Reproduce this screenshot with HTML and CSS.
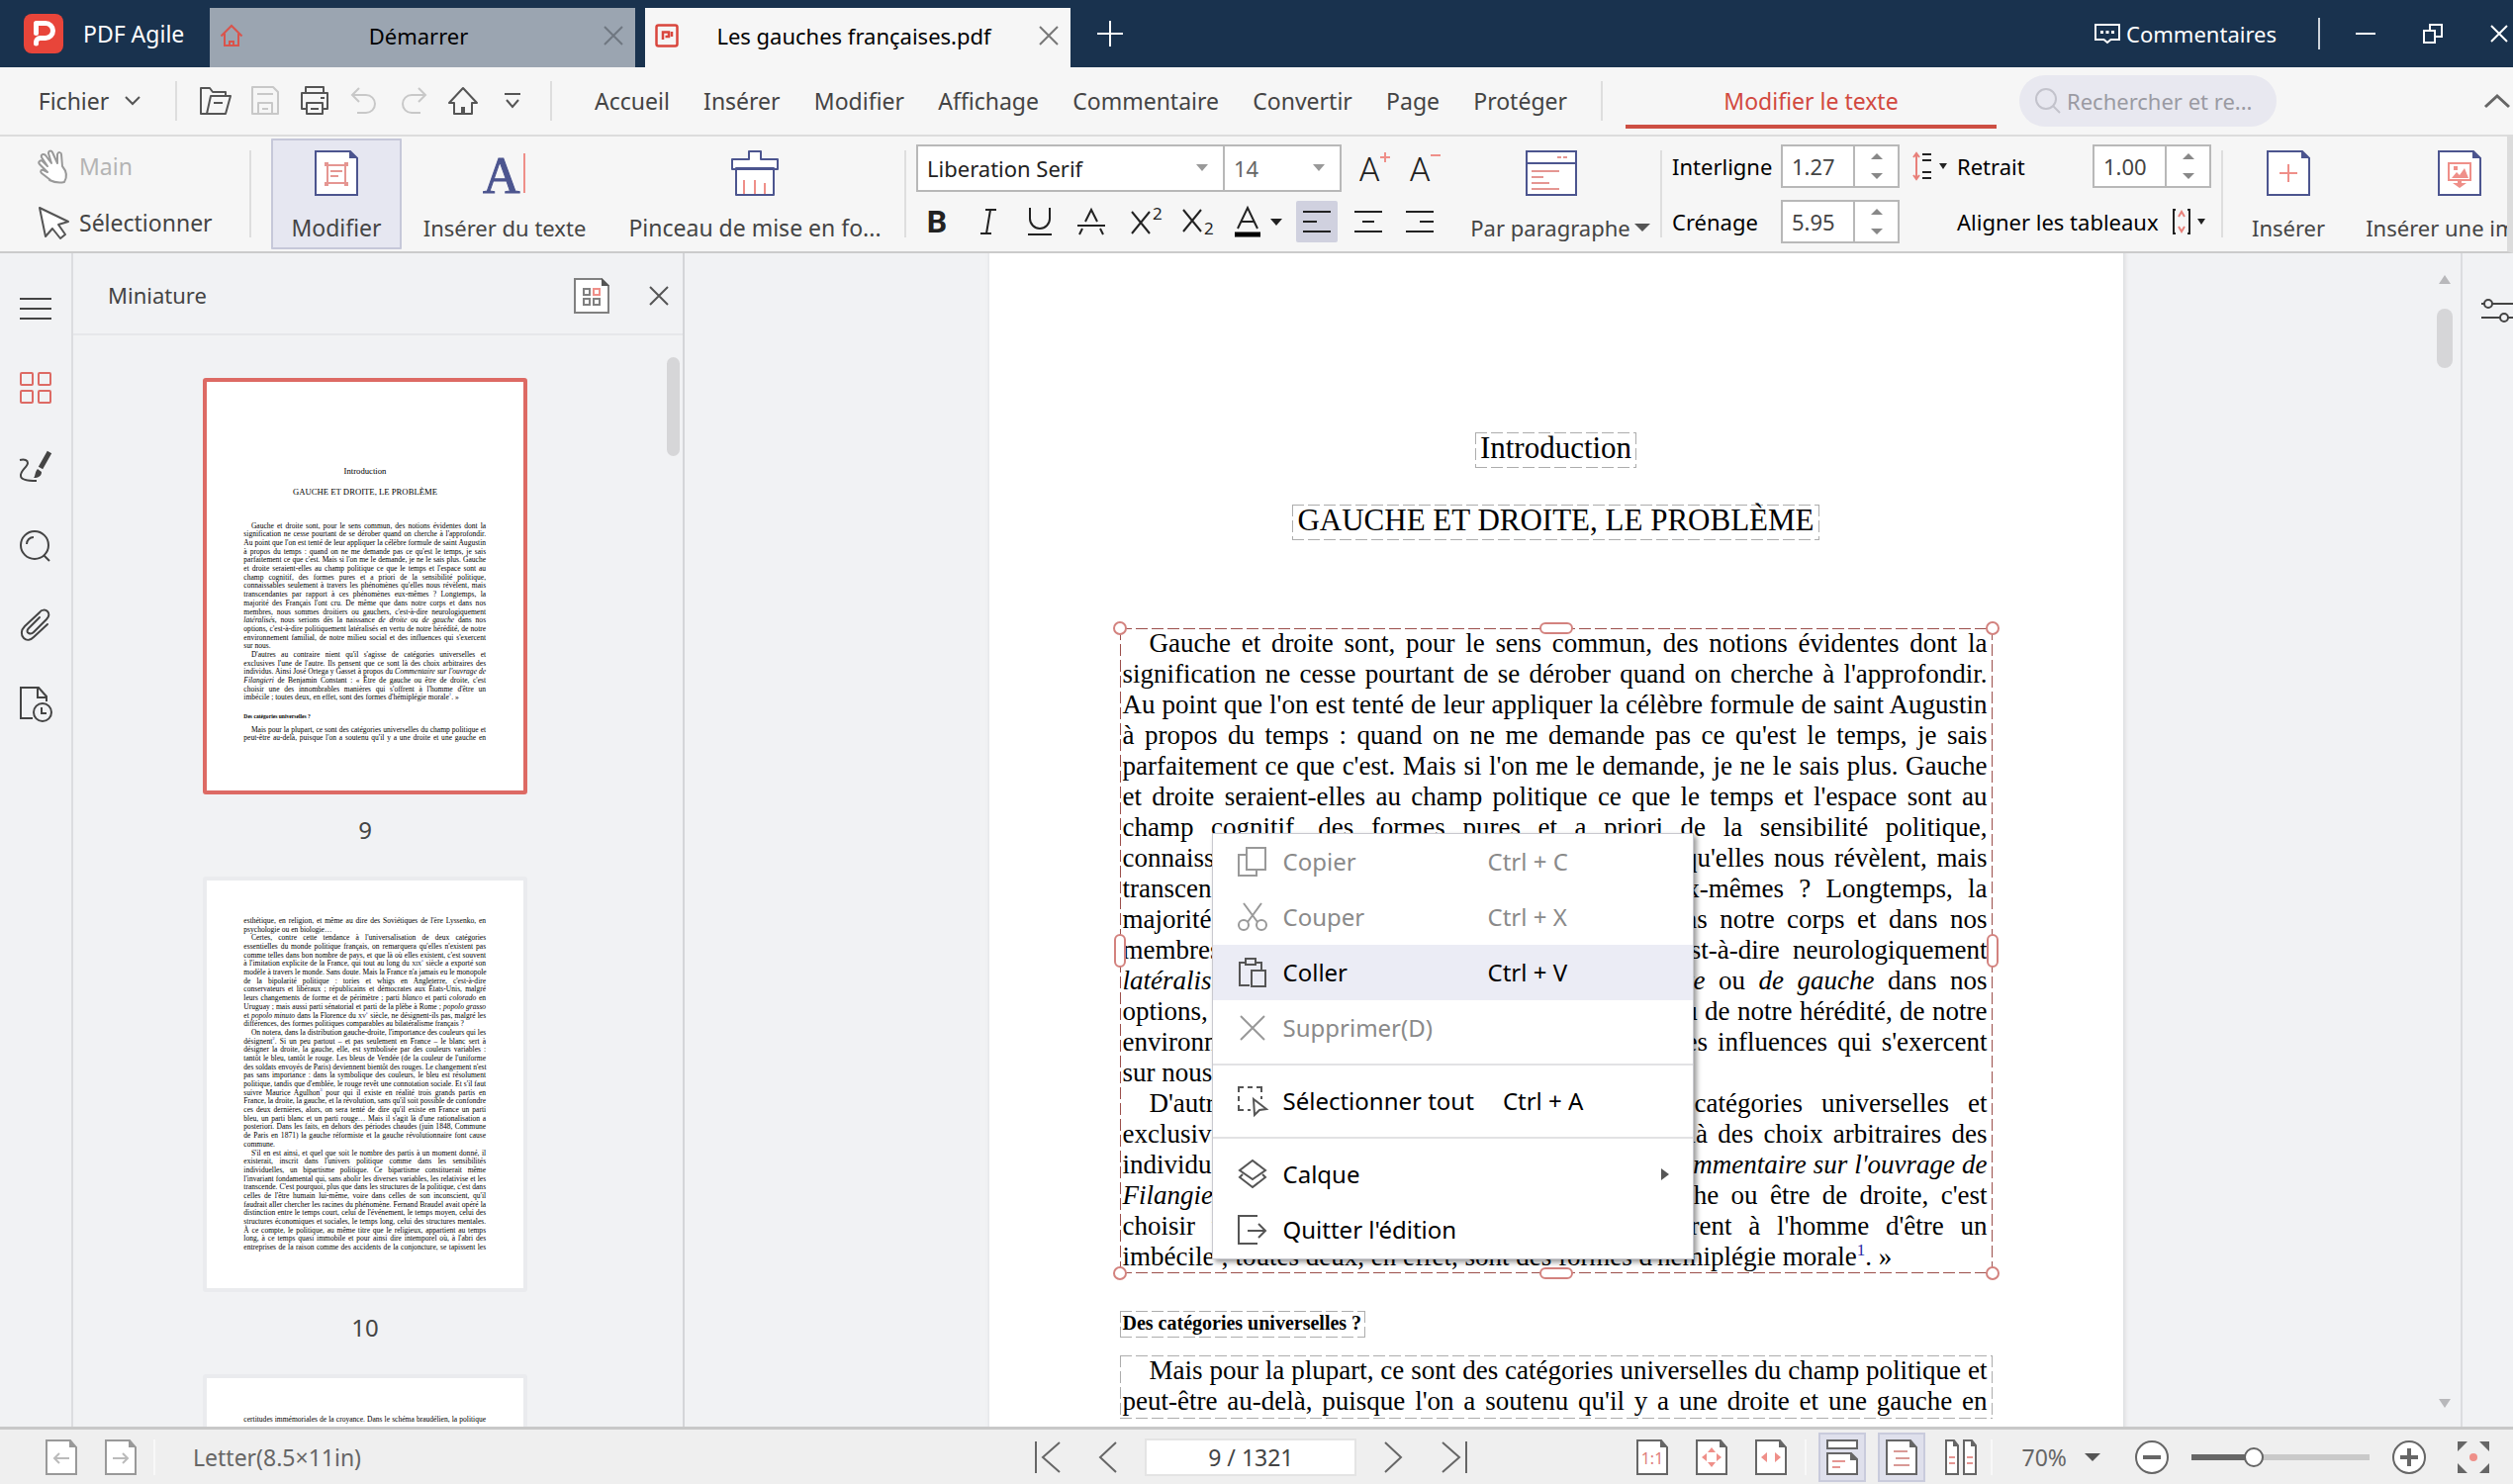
FILE: index.html
```html
<!DOCTYPE html>
<html lang="fr">
<head>
<meta charset="utf-8">
<title>PDF Agile - Les gauches françaises.pdf</title>
<link rel="stylesheet" href="styles.css">
</head>
<body>
<div class="app">

<header class="titlebar">
  <div class="brand">
    <svg class="brand-logo" width="40" height="40" viewBox="0 0 40 40"><rect width="40" height="40" rx="8" fill="#e8453a"/><path d="M12.500 19.500V9.500H22a7 7 0 0 1 0 15h-5.500a4 4 0 0 0-4 4V30" fill="none" stroke="#fff" stroke-width="5" stroke-linecap="round" stroke-linejoin="round"/></svg>
    <span>PDF Agile</span>
  </div>
  <div class="tab tab-idle">
    <svg width="24" height="24" viewBox="0 0 24 24" fill="none" stroke="#d9544c" stroke-width="2"><path d="M1.500 12.500 12 2l10.500 10.500M5 10v12h14V10M10 22v-4h4v4"/></svg>
    <span class="tab-name">Démarrer</span>
    <button class="tab-close" aria-label="Fermer"><svg width="20" height="20" viewBox="0 0 20 20" fill="none" stroke="#6f7781" stroke-width="2"><path d="m1 1 18 18M19 1 1 19"/></svg></button>
  </div>
  <div class="tab tab-current">
    <svg width="24" height="24" viewBox="0 0 24 24" fill="none" stroke="#d9463d"><rect x="1.500" y="1.500" width="21" height="21" rx="2" stroke-width="2.500"/><path d="M8 16V8.500h6v4.500h-3.500M17 8v5" stroke-width="2.500"/></svg>
    <span class="tab-name">Les gauches françaises.pdf</span>
    <button class="tab-close" aria-label="Fermer"><svg width="20" height="20" viewBox="0 0 20 20" fill="none" stroke="#777" stroke-width="2"><path d="m1 1 18 18M19 1 1 19"/></svg></button>
  </div>
  <button class="tab-new" aria-label="Nouvel onglet"><svg width="26" height="26" viewBox="0 0 26 26" stroke="#fff" stroke-width="2"><path d="M13 0v26M0 13h26"/></svg></button>
  <div class="window-tools">
    <button class="comments"><svg width="26" height="22" viewBox="0 0 26 22" fill="none" stroke="#fff" stroke-width="2"><path d="M1 2h24v15h-8.500L13 20l-3.500-3H1z"/><path d="M6 9.500h3M11.500 9.500h3M17 9.500h3" stroke-width="3"/></svg>Commentaires</button>
    <span class="win-sep"></span>
    <button class="win-btn" aria-label="Réduire"><svg width="20" height="20" viewBox="0 0 20 20" stroke="#fff" stroke-width="2"><path d="M0 10h20"/></svg></button>
    <button class="win-btn" aria-label="Restaurer"><svg width="20" height="20" viewBox="0 0 20 20" fill="none" stroke="#fff" stroke-width="2"><path d="M1 7h11v12H1zM7 7V1h12v12h-7"/></svg></button>
    <button class="win-btn" aria-label="Fermer"><svg width="18" height="18" viewBox="0 0 18 18" stroke="#fff" stroke-width="2"><path d="m1 1 16 16M17 1 1 17"/></svg></button>
  </div>
</header>

<nav class="menubar">
  <button class="file-menu">Fichier <svg width="16" height="10" viewBox="0 0 16 10" fill="none" stroke="#555" stroke-width="2"><path d="m1 1 7 7 7-7"/></svg></button>
  <span class="bar-sep"></span>
  <div class="quick">
    <button aria-label="Ouvrir"><svg width="32" height="30" viewBox="0 0 32 30" fill="none" stroke="#555" stroke-width="2" stroke-linejoin="round"><path d="M7 28H1V2h9l3 4h13v4M7 28 11 10h20l-5 18zM14 17h9"/></svg></button>
    <button aria-label="Enregistrer"><svg width="28" height="30" viewBox="0 0 28 30" fill="none" stroke="#c8c8c8" stroke-width="2" stroke-linejoin="round"><path d="M1 1h21l5 5v22H1zM6 8h16M7 28V17h14v11M11 23h6"/></svg></button>
    <button aria-label="Imprimer"><svg width="28" height="30" viewBox="0 0 28 30" fill="none" stroke="#555" stroke-width="2" stroke-linejoin="round"><path d="M5 7V1h18v6M5 23H1V7h26v16h-4M6 17h16v11H6zM20 12h4M10 23h8"/></svg></button>
    <button aria-label="Annuler"><svg width="26" height="28" viewBox="0 0 26 28" fill="none" stroke="#c8c8c8" stroke-width="2"><path d="m8 1-7 7 7 7M1 8h14a9 9 0 0 1 0 18H6"/></svg></button>
    <button aria-label="Rétablir"><svg width="26" height="28" viewBox="0 0 26 28" fill="none" stroke="#c8c8c8" stroke-width="2"><path d="m18 1 7 7-7 7M25 8H11a9 9 0 0 0 0 18h9"/></svg></button>
    <button aria-label="Accueil"><svg width="30" height="30" viewBox="0 0 30 30" fill="none" stroke="#555" stroke-width="2" stroke-linejoin="round"><path d="M15 2 1 17h5v11h18V17h5z"/><path d="M15 21v7" stroke-width="4"/></svg></button>
    <button aria-label="Personnaliser"><svg width="16" height="16" viewBox="0 0 16 16" fill="none" stroke="#555" stroke-width="2"><path d="M0 1h16M2 7l6 7 6-7"/></svg></button>
  </div>
  <span class="bar-sep"></span>
  <div class="menus">
    <a href="#">Accueil</a><a href="#">Insérer</a><a href="#">Modifier</a><a href="#">Affichage</a><a href="#">Commentaire</a><a href="#">Convertir</a><a href="#">Page</a><a href="#">Protéger</a>
  </div>
  <span class="bar-sep"></span>
  <a class="menu-current" href="#">Modifier le texte</a>
  <label class="search"><svg width="26" height="26" viewBox="0 0 26 26" fill="none" stroke="#c3c3cc" stroke-width="2"><circle cx="11" cy="11" r="10"/><path d="m18 18 7 7"/></svg><input type="text" aria-label="Rechercher" placeholder="Rechercher et re..."></label>
  <button class="collapse" aria-label="Réduire le ruban"><svg width="26" height="14" viewBox="0 0 26 14" fill="none" stroke="#666" stroke-width="3"><path d="m1 13 12-11 12 11"/></svg></button>
</nav>

<section class="ribbon">
  <div class="rb-tools">
    <button class="tool tool-off"><svg width="34" height="34" viewBox="0 0 34 34" fill="#fff" stroke="#999" stroke-width="2" stroke-linejoin="round" stroke-linecap="round"><path d="M13 31 4 24c-2-2 0-4 2-3l4 2-8-8c-2-2 1-5 3-3l5 5-6-9c-1-3 2-4 4-2l6 8-3-10c0-3 3-3 4-1l5 11 0-9c1-3 4-2 4 0l1 12c5 6 5 11 2 16-4 1-9 1-15-2z"/></svg>Main</button>
    <button class="tool"><svg width="34" height="34" viewBox="0 0 34 34" fill="#fff" stroke="#555" stroke-width="2" stroke-linejoin="round"><path d="M2 2 8 31l7-8 8 10 5-4-7-10 10-3z"/></svg>Sélectionner</button>
  </div>
  <span class="rb-sep"></span>
  <button class="big big-edit"><svg width="44" height="46" viewBox="0 0 44 46" fill="none"><path d="M1 1h35l7 7v37H1z" fill="#fff" stroke="#4c558f" stroke-width="2"/><path d="M35 0v8h9z" fill="#4c558f"/><path d="M13 12v24M31 12v24M10 15h24M10 33h24M16 21h12M16 26h8" stroke="#e59692" stroke-width="2"/><path d="M10 12h4v4h-4zM30 12h4v4h-4zM10 32h4v4h-4zM30 32h4v4h-4z" fill="#e59692"/></svg>Modifier</button>
  <button class="big big-text"><svg width="44" height="46" viewBox="0 0 44 46"><text x="0" y="43" font-family="Liberation Serif, serif" font-size="52" fill="#4c558f" stroke="#4c558f">A</text><path d="M42 3v40" stroke="#ef8f89" stroke-width="2"/></svg>Insérer du texte</button>
  <button class="big big-brush"><svg width="48" height="46" viewBox="0 0 48 46" fill="#fff" stroke="#4c558f" stroke-width="2" stroke-linejoin="round"><path d="M5 18h38v27H5zM1 9h17V1h12v8h17v10H1z"/><path d="M13 30v14M24 30v14M34 33v11" stroke="#ef8f89"/></svg>Pinceau de mise en fo...</button>
  <span class="rb-sep"></span>
  <div class="rb-font">
    <div class="font-row">
      <span class="combo combo-font"><select aria-label="Police"><option>Liberation Serif</option></select><i class="caret"></i></span><span class="combo combo-size"><select aria-label="Taille"><option>14</option></select><i class="caret"></i></span>
      <button class="grow" aria-label="Agrandir"><span>A</span><svg width="10" height="10" viewBox="0 0 10 10" stroke="#ef8f89" stroke-width="2"><path d="M5 0v10M0 5h10"/></svg></button>
      <button class="grow shrink" aria-label="Diminuer"><span>A</span><svg width="10" height="10" viewBox="0 0 10 10" stroke="#ef8f89" stroke-width="2"><path d="M0 3h10"/></svg></button>
    </div>
    <div class="style-row">
      <button class="st"><b>B</b></button>
      <button class="st" aria-label="Italique"><svg width="16" height="26" viewBox="0 0 16 26" fill="none" stroke="#222" stroke-width="2"><path d="M5 1h11M0 25h11M10 1 6 25"/></svg></button>
      <button class="st" aria-label="Souligné"><svg width="26" height="28" viewBox="0 0 26 28" fill="none" stroke="#222" stroke-width="2"><path d="M3 0v11a10 10 0 0 0 20 0V0M1 27h24"/></svg></button>
      <button class="st" aria-label="Barré"><svg width="28" height="28" viewBox="0 0 28 28" fill="none" stroke="#222" stroke-width="2"><path d="M0 18h28M8 14 14 2l6 12M5 21l-3 6M23 21l3 6"/></svg></button>
      <button class="st st-script" aria-label="Exposant"><svg width="32" height="30" viewBox="0 0 32 30" fill="none" stroke="#222" stroke-width="2"><path d="m1 5 18 22M19 5 1 27"/><text x="22" y="13" font-family="Noto Sans, sans-serif" font-size="17" fill="#222" stroke="none">2</text></svg></button>
      <button class="st st-script" aria-label="Indice"><svg width="32" height="30" viewBox="0 0 32 30" fill="none" stroke="#222" stroke-width="2"><path d="m1 3 18 22M19 3 1 25"/><text x="22" y="28" font-family="Noto Sans, sans-serif" font-size="17" fill="#222" stroke="none">2</text></svg></button>
      <button class="st st-color" aria-label="Couleur"><svg width="26" height="32" viewBox="0 0 26 32" fill="none" stroke="#222" stroke-width="2"><path d="M3 23 13 2l10 21M7 16h12"/><path d="M0 29h26" stroke="#000" stroke-width="5"/></svg><i class="caret caret-dark"></i></button>
      <button class="st st-on" aria-label="Gauche"><svg width="28" height="24" viewBox="0 0 28 24" stroke="#222" stroke-width="2"><path d="M0 2h28M0 12h14M0 22h28"/></svg></button>
      <button class="st" aria-label="Centre"><svg width="28" height="24" viewBox="0 0 28 24" stroke="#222" stroke-width="2"><path d="M0 2h28M8 12h12M0 22h28"/></svg></button>
      <button class="st" aria-label="Droite"><svg width="28" height="24" viewBox="0 0 28 24" stroke="#222" stroke-width="2"><path d="M0 2h28M14 12h14M0 22h28"/></svg></button>
    </div>
  </div>
  <button class="big big-para"><svg width="52" height="46" viewBox="0 0 52 46" fill="none" stroke="#4c558f" stroke-width="2"><path d="M1 1h50v44H1z" fill="#fff"/><path d="M1 13h50"/><path d="M32 7h4M38 7h4M6 21h28M6 27h12M6 33h18M6 39h28" stroke="#e59692"/></svg><span class="para-label">Par paragraphe<i class="caret caret-big"></i></span></button>
  <span class="rb-sep rb-sep-para"></span>
  <div class="rb-space">
    <label for="il">Interligne</label>
    <span class="spin"><input id="il" type="text" value="1.27"><span class="spin-btns"><button aria-label="Plus"><i class="up"></i></button><button aria-label="Moins"><i class="dn"></i></button></span></span>
    <button class="gap-btn" aria-label="Espacement"><svg width="20" height="28" viewBox="0 0 20 28" fill="none" stroke="#222" stroke-width="2"><path d="M10 2h9M10 8h9M10 20h9M10 26h9"/><path d="M4 1v26M1 5l3-4 3 4M1 23l3 4 3-4" stroke="#e8807a"/></svg><i class="caret caret-small"></i></button>
    <label for="rt">Retrait</label>
    <span class="spin"><input id="rt" type="text" value="1.00"><span class="spin-btns"><button aria-label="Plus"><i class="up"></i></button><button aria-label="Moins"><i class="dn"></i></button></span></span>
    <label for="cr">Crénage</label>
    <span class="spin"><input id="cr" type="text" value="5.95"><span class="spin-btns"><button aria-label="Plus"><i class="up"></i></button><button aria-label="Moins"><i class="dn"></i></button></span></span>
    <button class="align-tables">Aligner les tableaux<svg width="18" height="26" viewBox="0 0 18 26" fill="none" stroke="#222" stroke-width="2"><path d="M3 1H1v24h2M15 1h2v24h-2"/><path d="m6 8 3-5 3 5M6 18l3 5 3-5" stroke="#e8807a"/></svg><i class="caret caret-small"></i></button>
  </div>
  <span class="rb-sep rb-sep-space"></span>
  <button class="big big-insert"><svg width="44" height="46" viewBox="0 0 44 46" fill="none"><path d="M1 1h35l7 7v37H1z" fill="#fff" stroke="#4c558f" stroke-width="2"/><path d="M35 0v8h9z" fill="#4c558f"/><path d="M22 14v18M13 23h18" stroke="#ef8f89" stroke-width="2"/></svg>Insérer</button>
  <button class="big big-image"><svg width="44" height="46" viewBox="0 0 44 46" fill="none"><path d="M1 1h35l7 7v37H1z" fill="#fff" stroke="#4c558f" stroke-width="2"/><path d="M35 0v8h9z" fill="#4c558f"/><path d="M11 13h22v17H11z" stroke="#ef8f89" stroke-width="2"/><path d="m14 28 5-6 3 3 5-7 4 10zM16 16h4v4h-4zM20 30h4v3h5l-7 5-7-5h5z" fill="#ef8f89"/></svg>Insérer une image</button>
</section>

<main class="work">
  <aside class="rail">
    <button aria-label="Menu"><svg width="32" height="32" viewBox="0 0 32 32" stroke="#444" stroke-width="2"><path d="M0 6h32M0 16h32M0 26h32"/></svg></button>
    <button aria-label="Miniatures"><svg width="32" height="32" viewBox="0 0 32 32" fill="none" stroke="#dd6a64" stroke-width="2"><rect x="1" y="1" width="12" height="12" rx="1"/><rect x="19" y="1" width="12" height="12" rx="1"/><rect x="1" y="19" width="12" height="12" rx="1"/><rect x="19" y="19" width="12" height="12" rx="1"/></svg></button>
    <button aria-label="Annotations"><svg width="34" height="32" viewBox="0 0 34 32" fill="none" stroke="#444" stroke-width="2"><path d="M1 9c5-1 8 0 8 3 0 4-8 8-7 13 0 4 6 5 16 5"/><path d="M31 1 22 17" stroke-width="5"/><path d="m19 18 4 3c0 4-3 6-8 6 2-2 1-6 4-9z" fill="#444" stroke="none"/></svg></button>
    <button aria-label="Rechercher"><svg width="32" height="32" viewBox="0 0 32 32" fill="none" stroke="#444" stroke-width="2"><circle cx="15" cy="15" r="14"/><path d="m24 25 6 6M7 14c0-4 3-7 7-7"/></svg></button>
    <button aria-label="Pièces jointes"><svg width="32" height="34" viewBox="0 0 32 34" fill="none" stroke="#444" stroke-width="2" stroke-linecap="round"><path d="M20 9 9 20c-2 2-2 4 0 5s3 1 5-1l13-13c3-3 3-6 1-8s-6-2-8 1L5 18c-4 4-4 9-1 12s7 2 10-1l14-13"/></svg></button>
    <button aria-label="Historique"><svg width="34" height="36" viewBox="0 0 34 36" fill="none" stroke="#444" stroke-width="2"><path d="M14 32H2V1h18l8 9v5M19 1v10h9"/><circle cx="24" cy="26" r="9"/><path d="M23 21v6h5"/></svg></button>
  </aside>

  <section class="thumbs">
    <div class="thumbs-head">
      <h2>Miniature</h2>
      <button aria-label="Options"><svg width="36" height="36" viewBox="0 0 36 36" fill="none"><path d="M1 1h27l7 7v27H1z" fill="#fff" stroke="#808080" stroke-width="2"/><path d="M28 0v8h8z" fill="#555"/><g stroke="#808080" stroke-width="2"><path d="M10 11h6v6h-6zM10 21h6v6h-6zM20 21h6v6h-6z"/><path d="M20 11h6v6h-6z" stroke="#ef8f89"/></g></svg></button>
      <button aria-label="Fermer"><svg width="20" height="20" viewBox="0 0 20 20" stroke="#555" stroke-width="2"><path d="m1 1 18 18M19 1 1 19"/></svg></button>
    </div>
    <div class="thumbs-list">
      <div class="thumb thumb-on"><article class="sheet">
        <h1>Introduction</h1>
        <h1 class="second">GAUCHE ET DROITE, LE PROBLÈME</h1>
        <div class="body">
          <p class="lead"><span>Gauche et droite sont, pour le sens commun, des notions évidentes dont la</span><span>signification ne cesse pourtant de se dérober quand on cherche à l'approfondir.</span><span>Au point que l'on est tenté de leur appliquer la célèbre formule de saint Augustin</span><span>à propos du temps : quand on ne me demande pas ce qu'est le temps, je sais</span><span>parfaitement ce que c'est. Mais si l'on me le demande, je ne le sais plus. Gauche</span><span>et droite seraient-elles au champ politique ce que le temps et l'espace sont au</span><span>champ cognitif, des formes pures et a priori de la sensibilité politique,</span><span>connaissables seulement à travers les phénomènes qu'elles nous révèlent, mais</span><span>transcendantes par rapport à ces phénomènes eux-mêmes ? Longtemps, la</span><span>majorité des Français l'ont cru. De même que dans notre corps et dans nos</span><span>membres, nous sommes droitiers ou gauchers, c'est-à-dire neurologiquement</span><span><em>latéralisés</em>, nous serions dès la naissance <em>de droite</em> ou <em>de gauche</em> dans nos</span><span>options, c'est-à-dire politiquement latéralisés en vertu de notre hérédité, de notre</span><span>environnement familial, de notre milieu social et des influences qui s'exercent</span><span class="end">sur nous.</span></p>
          <p class="lead"><span>D'autres au contraire nient qu'il s'agisse de catégories universelles et</span><span>exclusives l'une de l'autre. Ils pensent que ce sont là des choix arbitraires des</span><span>individus. Ainsi José Ortega y Gasset à propos du <em>Commentaire sur l'ouvrage de</em></span><span><em>Filangieri</em> de Benjamin Constant : « Être de gauche ou être de droite, c'est</span><span>choisir une des innombrables manières qui s'offrent à l'homme d'être un</span><span class="end">imbécile ; toutes deux, en effet, sont des formes d'hémiplégie morale<sup>1</sup>. »</span></p>
        </div>
        <h2>Des catégories universelles ?</h2>
        <div class="body">
          <p class="lead"><span>Mais pour la plupart, ce sont des catégories universelles du champ politique et</span><span>peut-être au-delà, puisque l'on a soutenu qu'il y a une droite et une gauche en</span></p>
        </div>
      </article></div>
      <div class="thumb-no">9</div>
      <div class="thumb"><article class="sheet sheet-flow">
        <div class="body">
          <p><span>esthétique, en religion, et même au dire des Soviétiques de l'ère Lyssenko, en</span><span class="end">psychologie ou en biologie…</span></p>
          <p class="lead"><span>Certes, contre cette tendance à l'universalisation de deux catégories</span><span>essentielles du monde politique français, on remarquera qu'elles n'existent pas</span><span>comme telles dans bon nombre de pays, et que là où elles existent, c'est souvent</span><span>à l'imitation explicite de la France, qui tout au long du <small>XIX</small><sup>e</sup> siècle a exporté son</span><span>modèle à travers le monde. Sans doute. Mais la France n'a jamais eu le monopole</span><span>de la bipolarité politique : tories et whigs en Angleterre, c'est-à-dire</span><span>conservateurs et libéraux ; républicains et démocrates aux États-Unis, malgré</span><span>leurs changements de forme et de périmètre ; parti <em>blanco</em> et parti <em>colorado</em> en</span><span>Uruguay ; mais aussi parti sénatorial et parti de la plèbe à Rome ; <em>popolo grasso</em></span><span>et <em>popolo minuto</em> dans la Florence du <small>XV</small><sup>e</sup> siècle, ne désignent-ils pas, malgré les</span><span class="end">différences, des formes politiques comparables au bilatéralisme français ?</span></p>
          <p class="lead"><span>On notera, dans la distribution gauche-droite, l'importance des couleurs qui les</span><span>désignent<sup>2</sup>. Si un peu partout – et pas seulement en France – le blanc sert à</span><span>désigner la droite, la gauche, elle, est symbolisée par des couleurs variables :</span><span>tantôt le bleu, tantôt le rouge. Les bleus de Vendée (de la couleur de l'uniforme</span><span>des soldats envoyés de Paris) deviennent bientôt des rouges. Le changement n'est</span><span>pas sans importance : dans la symbolique des couleurs, le bleu est résolument</span><span>politique, tandis que d'emblée, le rouge revêt une connotation sociale. Et s'il faut</span><span>suivre Maurice Agulhon<sup>3</sup> pour qui il existe en réalité trois grands partis en</span><span>France, la droite, la gauche, et la révolution, sans qu'il soit possible de confondre</span><span>ces deux dernières, alors, on sera tenté de dire qu'il existe en France un parti</span><span>bleu, un parti blanc et un parti rouge… Mais il s'agit là d'une rationalisation a</span><span>posteriori. Dans les faits, en dehors des périodes chaudes (juin 1848, Commune</span><span>de Paris en 1871) la gauche réformiste et la gauche révolutionnaire font cause</span><span class="end">commune.</span></p>
          <p class="lead"><span>S'il en est ainsi, et quel que soit le nombre des partis à un moment donné, il</span><span>existerait, inscrit dans l'univers politique comme dans les sensibilités</span><span>individuelles, un bipartisme politique. Ce bipartisme constituerait même</span><span>l'invariant fondamental qui, sans abolir les diverses variables, les relativise et les</span><span>transcende. C'est pourquoi, plus que dans les structures de la politique, c'est dans</span><span>celles de l'être humain lui-même, voire dans celles de son inconscient, qu'il</span><span>faudrait aller chercher les racines du phénomène. Fernand Braudel avait opéré la</span><span>distinction entre le temps court, celui de l'événement, le temps moyen, celui des</span><span>structures économiques et sociales, le temps long, celui des structures mentales.</span><span>À ce compte, le politique, au même titre que le religieux, appartient au temps</span><span>long, à ce temps quasi immobile et pour ainsi dire intemporel où, à l'abri des</span><span>entreprises de la raison comme des accidents de la conjoncture, se tapissent les</span></p>
        </div>
      </article></div>
      <div class="thumb-no">10</div>
      <div class="thumb"><article class="sheet sheet-flow">
        <div class="body"><p><span>certitudes immémoriales de la croyance. Dans le schéma braudélien, la politique</span></p></div>
      </article></div>
    </div>
    <span class="scroll-thumb"></span>
  </section>

  <section class="viewer">
    <div class="canvas">
      <article class="sheet sheet-main">
        <h1><span class="frame">Introduction</span></h1>
        <h1 class="second"><span class="frame">GAUCHE ET DROITE, LE PROBLÈME</span></h1>
        <div class="body frame frame-on">
          <p class="lead"><span>Gauche et droite sont, pour le sens commun, des notions évidentes dont la</span><span>signification ne cesse pourtant de se dérober quand on cherche à l'approfondir.</span><span>Au point que l'on est tenté de leur appliquer la célèbre formule de saint Augustin</span><span>à propos du temps : quand on ne me demande pas ce qu'est le temps, je sais</span><span>parfaitement ce que c'est. Mais si l'on me le demande, je ne le sais plus. Gauche</span><span>et droite seraient-elles au champ politique ce que le temps et l'espace sont au</span><span>champ cognitif, des formes pures et a priori de la sensibilité politique,</span><span>connaissables seulement à travers les phénomènes qu'elles nous révèlent, mais</span><span>transcendantes par rapport à ces phénomènes eux-mêmes ? Longtemps, la</span><span>majorité des Français l'ont cru. De même que dans notre corps et dans nos</span><span>membres, nous sommes droitiers ou gauchers, c'est-à-dire neurologiquement</span><span><em>latéralisés</em>, nous serions dès la naissance <em>de droite</em> ou <em>de gauche</em> dans nos</span><span>options, c'est-à-dire politiquement latéralisés en vertu de notre hérédité, de notre</span><span>environnement familial, de notre milieu social et des influences qui s'exercent</span><span class="end">sur nous.</span></p>
          <p class="lead"><span>D'autres au contraire nient qu'il s'agisse de catégories universelles et</span><span>exclusives l'une de l'autre. Ils pensent que ce sont là des choix arbitraires des</span><span>individus. Ainsi José Ortega y Gasset à propos du <em>Commentaire sur l'ouvrage de</em></span><span><em>Filangieri</em> de Benjamin Constant : « Être de gauche ou être de droite, c'est</span><span>choisir une des innombrables manières qui s'offrent à l'homme d'être un</span><span class="end">imbécile ; toutes deux, en effet, sont des formes d'hémiplégie morale<sup>1</sup>. »</span></p>
          <i class="grip g-nw"></i><i class="grip g-ne"></i><i class="grip g-sw"></i><i class="grip g-se"></i>
          <i class="grip g-n"></i><i class="grip g-s"></i><i class="grip g-w"></i><i class="grip g-e"></i>
        </div>
        <h2><span class="frame">Des catégories universelles ?</span></h2>
        <div class="body frame">
          <p class="lead"><span>Mais pour la plupart, ce sont des catégories universelles du champ politique et</span><span>peut-être au-delà, puisque l'on a soutenu qu'il y a une droite et une gauche en</span></p>
        </div>
        <div class="context" role="menu">
          <button class="mi" role="menuitem" disabled><svg width="30" height="30" viewBox="0 0 30 30" fill="none" stroke="#999" stroke-width="2"><path d="M9 1h19v22H9zM9 8H1v21h18v-6"/></svg><span class="mi-name">Copier</span><span>Ctrl + C</span></button>
          <button class="mi" role="menuitem" disabled><svg width="30" height="30" viewBox="0 0 30 30" fill="none" stroke="#999" stroke-width="2"><path d="M6 1 20 20M24 1 10 20"/><circle cx="6" cy="23" r="5"/><circle cx="24" cy="23" r="5"/></svg><span class="mi-name">Couper</span><span>Ctrl + X</span></button>
          <button class="mi mi-hover" role="menuitem"><svg width="30" height="30" viewBox="0 0 30 30" fill="none" stroke="#555" stroke-width="2"><path d="M12 28H2V5h6M18 5h6v7M8 1h10v6H8zM14 13h14v16H14z"/></svg><span class="mi-name">Coller</span><span>Ctrl + V</span></button>
          <button class="mi" role="menuitem" disabled><svg width="30" height="30" viewBox="0 0 30 30" fill="none" stroke="#999" stroke-width="2"><path d="m3 3 24 24M27 3 3 27"/></svg><span class="mi-name">Supprimer(D)</span></button>
          <hr>
          <button class="mi" role="menuitem"><svg width="30" height="30" viewBox="0 0 30 30" fill="none" stroke="#555" stroke-width="2"><path d="M1 6V1h5M10 1h5M19 1h5v5M24 10v3M1 10v5M1 19v5h5M10 24h3"/><path d="m16 13 13 10-7 1-5 5z"/></svg><span class="mi-name">Sélectionner tout</span><span>Ctrl + A</span></button>
          <hr>
          <button class="mi" role="menuitem"><svg width="30" height="30" viewBox="0 0 30 30" fill="none" stroke="#555" stroke-width="2"><path d="m15 1 13 10-13 9L2 11zM5 15l-3 3 13 10 13-10-3-3"/></svg><span class="mi-name">Calque</span><i class="mi-more"></i></button>
          <button class="mi" role="menuitem"><svg width="30" height="30" viewBox="0 0 30 30" fill="none" stroke="#555" stroke-width="2"><path d="M20 1H1v28h19M10 16h17M21 9l7 7-7 7"/></svg><span class="mi-name">Quitter l'édition</span></button>
        </div>
      </article>
    </div>
    <div class="scrollbar"><i class="up"></i><span></span><i class="dn"></i></div>
  </section>

  <aside class="rail-right">
    <button aria-label="Propriétés"><svg width="34" height="28" viewBox="0 0 34 28" fill="none" stroke="#444" stroke-width="2"><path d="M0 7h3M11 7h23M0 21h19M27 21h7"/><circle cx="7" cy="7" r="4"/><circle cx="23" cy="21" r="4"/></svg></button>
  </aside>
</main>

<footer class="status">
  <div class="st-left">
    <button aria-label="Vue précédente"><svg width="32" height="36" viewBox="0 0 32 36" fill="none"><path d="M1 1h24l6 7v27H1z" fill="#fff" stroke="#999" stroke-width="2"/><path d="M24 0v8h8z" fill="#999"/><path d="M24 19H10M14 14l-5 5 5 5" stroke="#bbb" stroke-width="2"/></svg></button>
    <button aria-label="Vue suivante"><svg width="32" height="36" viewBox="0 0 32 36" fill="none"><path d="M1 1h24l6 7v27H1z" fill="#fff" stroke="#999" stroke-width="2"/><path d="M24 0v8h8z" fill="#999"/><path d="M8 19h14M18 14l5 5-5 5" stroke="#bbb" stroke-width="2"/></svg></button>
    <span class="st-sep"></span>
    <span class="paper">Letter(8.5×11in)</span>
  </div>
  <div class="st-nav">
    <button aria-label="Première page"><svg width="26" height="32" viewBox="0 0 26 32" fill="none" stroke="#666" stroke-width="2"><path d="M1 0v32M25 1 8 16l17 15"/></svg></button>
    <button aria-label="Page précédente"><svg width="18" height="32" viewBox="0 0 18 32" fill="none" stroke="#666" stroke-width="2"><path d="M17 1 1 16l16 15"/></svg></button>
    <input type="text" aria-label="Page" value="9 / 1321">
    <button aria-label="Page suivante"><svg width="18" height="32" viewBox="0 0 18 32" fill="none" stroke="#666" stroke-width="2"><path d="m1 1 16 15L1 31"/></svg></button>
    <button aria-label="Dernière page"><svg width="26" height="32" viewBox="0 0 26 32" fill="none" stroke="#666" stroke-width="2"><path d="M25 0v32M1 1l17 15L1 31"/></svg></button>
  </div>
  <div class="st-right">
    <button class="vw" aria-label="Taille réelle"><svg width="32" height="36" viewBox="0 0 32 36" fill="none"><path d="M1 1h24l6 7v27H1z" fill="#fff" stroke="#666" stroke-width="2"/><path d="M24 0v8h8z" fill="#666"/><text x="16" y="25" text-anchor="middle" font-family="Noto Sans, sans-serif" font-size="16" fill="#e0807b">1:1</text></svg></button>
    <button class="vw" aria-label="Page entière"><svg width="32" height="36" viewBox="0 0 32 36" fill="none"><path d="M1 1h24l6 7v27H1z" fill="#fff" stroke="#666" stroke-width="2"/><path d="M24 0v8h8z" fill="#666"/><path d="m16 8 4 5h-8zM16 28l4-5h-8zM6 18l5-4v8zM26 18l-5-4v8z" fill="#ef8f89"/></svg></button>
    <button class="vw" aria-label="Largeur"><svg width="32" height="36" viewBox="0 0 32 36" fill="none"><path d="M1 1h24l6 7v27H1z" fill="#fff" stroke="#666" stroke-width="2"/><path d="M24 0v8h8z" fill="#666"/><path d="m6 18 6-5v10zM26 18l-6-5v10z" fill="#ef8f89"/></svg></button>
    <span class="st-sep st-sep-b"></span>
    <button class="vw vw-on" aria-label="Continu"><svg width="32" height="36" viewBox="0 0 32 36" fill="none"><path d="M1 1h30v8H1zM1 14h24l6 6v15H1z" fill="#fff" stroke="#666" stroke-width="2"/><path d="M24 13v8h8z" fill="#666"/><path d="M6 22h13M6 28h8" stroke="#e59692" stroke-width="2"/></svg></button>
    <button class="vw vw-on" aria-label="Page simple"><svg width="32" height="36" viewBox="0 0 32 36" fill="none"><path d="M1 1h24l6 7v27H1z" fill="#fff" stroke="#666" stroke-width="2"/><path d="M24 0v8h8z" fill="#666"/><path d="M8 12h14M10 19h14M8 26h16" stroke="#d99a96" stroke-width="2"/></svg></button>
    <button class="vw" aria-label="Deux pages"><svg width="32" height="36" viewBox="0 0 32 36" fill="none"><path d="M1 1h8l4 5v29H1zM19 1h8l4 5v29H19z" fill="#fff" stroke="#666" stroke-width="2"/><path d="M8 0v7h6zM26 0v7h6z" fill="#666"/><path d="M4 18h6M4 24h6M22 18h6M22 24h6" stroke="#e59692" stroke-width="2"/></svg></button>
    <span class="st-sep st-sep-c"></span>
    <button class="pct">70%<i class="caret caret-big"></i></button>
    <button aria-label="Zoom arrière"><svg width="36" height="36" viewBox="0 0 36 36"><circle cx="18" cy="18" r="16" fill="#fff" stroke="#666" stroke-width="2"/><path d="M9 18h18" stroke="#666" stroke-width="4"/></svg></button>
    <input class="zoom-range" type="range" min="0" max="100" value="33" aria-label="Zoom">
    <button aria-label="Zoom avant"><svg width="36" height="36" viewBox="0 0 36 36"><circle cx="18" cy="18" r="16" fill="#fff" stroke="#666" stroke-width="2"/><path d="M9 18h18M18 9v18" stroke="#666" stroke-width="4"/></svg></button>
    <button class="full" aria-label="Plein écran"><svg width="32" height="32" viewBox="0 0 32 32"><path d="M0 0h10L0 10zM32 0v10L22 0zM0 32V22l10 10zM32 32H22l10-10z" fill="#666"/><circle cx="16" cy="16" r="4" fill="#ef8f89"/></svg></button>
  </div>
</footer>
</div>
</body>
</html>
```
FILE: styles.css
```css
* { box-sizing: border-box; }
body { margin: 0; overflow: hidden; font-family: "Noto Sans", "Open Sans", sans-serif; font-size: 22px; line-height: 30px; color: #444; }
button { margin: 0; padding: 0; border: 0; background: none; font: inherit; color: inherit; display: flex; align-items: center; justify-content: center; flex: none; white-space: nowrap; }
input, select { font: inherit; color: inherit; border: 0; padding: 0; margin: 0; min-width: 0; }
a { color: inherit; text-decoration: none; white-space: nowrap; }
svg { display: block; flex: none; overflow: visible; }
h1, h2, p { margin: 0; font-weight: normal; }
.app { display: flex; flex-direction: column; height: 100vh; overflow: hidden; background: #f1f2f4; }

/* Triangles */
.caret, .up, .dn, .mi-more { display: block; flex: none; width: 0; height: 0; border: 6px solid transparent; }
.caret { border-top: 7px solid #888; border-bottom: 0; }
.caret-dark { border-top-color: #222; margin-left: 10px; }
.caret-big { border-width: 8px 8px 0; border-top-color: #555; }
.caret-small { border-width: 6px 4px 0; border-top-color: #222; margin-left: 7px; }
.up { border-bottom: 6px solid #888; border-top: 0; }
.dn { border-top: 6px solid #888; border-bottom: 0; }

/* Title bar */
.titlebar { flex: none; display: flex; align-items: flex-end; height: 68px; background: #19324e; color: #fff; }
.brand { display: flex; align-items: center; gap: 20px; width: 212px; height: 68px; padding-left: 24px; flex: none; font-size: 23px; }
.tab { display: flex; align-items: center; height: 60px; width: 430px; padding: 0 12px 4px 10px; margin-right: 10px; color: #000; flex: none; }
.tab-idle { background: #9ba5b1; }
.tab-current { background: #f6f6f6; }
.tab-name { flex: 1; text-align: center; padding-right: 10px; }
.tab-new { width: 80px; height: 68px; margin-left: -10px; }
.window-tools { margin-left: auto; display: flex; align-items: center; height: 68px; padding-right: 5px; flex: none; }
.comments { gap: 6px; margin-right: 42px; }
.win-sep { width: 2px; height: 32px; background: #cdd3da; margin-right: 14px; }
.win-btn { width: 40px; height: 40px; margin-left: 28px; }
.win-btn:last-child { width: 18px; margin-left: 38px; }
.win-sep + .win-btn { margin-left: 12px; }

/* Menu bar */
.menubar { flex: none; display: flex; align-items: center; height: 70px; background: #f6f6f6; border-bottom: 2px solid #dcdcdc; }
.file-menu { gap: 16px; width: 177px; padding-left: 4px; height: 68px; font-size: 23px; }
.bar-sep { width: 2px; height: 40px; background: #dedede; flex: none; }
.quick { display: flex; width: 377px; padding-left: 14px; flex: none; }
.quick button { width: 50px; height: 40px; }
.menus { display: flex; width: 1060px; justify-content: space-between; padding: 0 34px 0 43px; flex: none; font-size: 23px; }
.menu-current { width: 375px; height: 55px; margin: 1px 23px 0; padding-top: 12px; text-align: center; border-bottom: 4px solid #cd4f43; color: #d2493f; flex: none; font-size: 23px; }
.search { display: flex; align-items: center; gap: 6px; width: 260px; height: 52px; padding: 0 16px; border-radius: 26px; background: #e8e8f0; flex: none; }
.search input { width: 196px; background: none; }
.search input::placeholder { color: #9a9aa2; opacity: 1; }
.collapse { margin-left: auto; margin-right: 3px; }

/* Ribbon */
.ribbon { flex: none; display: flex; height: 118px; background: #f6f6f6; border-bottom: 2px solid #cbcbcb; border-right: 6px solid #dcdcdc; overflow: hidden; padding-right: 2px; }
.rb-tools { width: 252px; padding: 13px 0 0 38px; flex: none; display: flex; flex-direction: column; gap: 23px; font-size: 23px; }
.tool { justify-content: flex-start; gap: 8px; height: 34px; }
.tool-off { color: #b4b4b4; }
.rb-sep { width: 2px; height: 88px; margin-top: 14px; background: #dedede; flex: none; }
.big { flex-direction: column; justify-content: flex-start; gap: 17px; height: 112px; margin-top: 2px; padding-top: 12px; border-radius: 1px; }
.big-edit { width: 132px; margin-left: 20px; background: #e6e7f1; box-shadow: inset 0 0 0 2px #c6c8d9; font-size: 23px; }
.big-text { width: 180px; margin-left: 14px; }
.big-brush { width: 270px; margin: 2px 16px 0 28px; font-size: 23px; }
.big-para { width: 196px; margin-left: 22px; padding-right: 16px; }
.para-label { display: flex; align-items: center; gap: 4px; margin-right: -18px; }
.rb-sep-para { margin-left: 4px; }
.big-insert { width: 100px; margin-left: 16px; }
.big-image { width: 200px; margin-left: 23px; }
.rb-font { width: 530px; padding-top: 8px; margin-left: 10px; flex: none; display: flex; flex-direction: column; gap: 9px; }
.font-row, .style-row { display: flex; }
.combo { position: relative; height: 48px; flex: none; }
.combo select { appearance: none; width: 100%; height: 48px; padding-left: 9px; background: #fff; border: 2px solid #b8b8b8; border-radius: 0; color: #222; }
.combo .caret { position: absolute; right: 17px; top: 20px; pointer-events: none; border-top-color: #999; }
.combo-font { width: 312px; }
.combo-size { width: 120px; margin-left: -2px; }
.combo-size select { color: #666; }
.grow { width: 44px; height: 48px; margin-left: 11px; align-items: flex-start; padding-top: 8px; color: #222; }
.grow span { font-family: Roboto, sans-serif; font-weight: 300; font-size: 34px; line-height: 34px; }
.shrink { margin-left: 7px; }
.style-row { gap: 10px; }
.st { width: 42px; height: 42px; color: #222; border-radius: 2px; }
.st b { font-family: Roboto, sans-serif; font-size: 32px; line-height: 42px; }
.st-script { padding-left: 8px; }
.st-color { width: 62px; padding-left: 6px; }
.st-on { background: #d0d1df; }
.rb-space { display: grid; grid-template-columns: 110px 120px 58px 137px 120px; grid-template-rows: 44px 44px; row-gap: 12px; align-items: center; margin: 8px 0 0 10px; color: #000; flex: none; height: 100px; }
.spin { display: flex; height: 44px; border: 2px solid #b8b8b8; background: #fff; }
.spin input { flex: 1; width: 40px; padding-left: 9px; color: #444; border-right: 2px solid #b8b8b8; }
.spin-btns { display: flex; flex-direction: column; width: 43px; justify-content: center; gap: 2px; }
.spin-btns button { height: 18px; }
.gap-btn { justify-content: flex-start; padding-left: 13px; }
.align-tables { grid-column: 4 / 6; justify-content: flex-start; }
.align-tables svg { margin-left: 14px; }
.rb-sep-space { margin-left: 10px; }

/* Work area */
.work { flex: 1; min-height: 0; display: flex; overflow: hidden; }
.rail { width: 74px; padding: 16px 2px 0 0; border-right: 2px solid #dcdde0; flex: none; }
.rail button { width: 72px; height: 80px; }
.thumbs { position: relative; width: 618px; border-right: 2px solid #d4d5d8; flex: none; display: flex; flex-direction: column; }
.thumbs-head { display: flex; align-items: center; height: 83px; padding: 4px 14px 0 35px; border-bottom: 2px solid #e6e7ea; flex: none; }
.thumbs-head h2 { flex: 1; margin-top: -2px; font-size: 22px; }
.thumbs-head button + button { margin-left: 40px; }
.thumbs-list { flex: 1; min-height: 0; overflow: hidden; display: flex; flex-direction: column; align-items: center; padding: 43px 26px 0 0; }
.thumb { border: 4px solid #eaebee; border-radius: 3px; flex: none; }
.thumb-on { border-color: #dd6a64; }
.thumb .sheet { zoom: 0.28; }
.thumb-no { margin: 21px 0 32px; font-size: 24px; flex: none; }
.scroll-thumb { position: absolute; right: 3px; top: 105px; width: 13px; height: 100px; border-radius: 7px; background: #d6d6d8; }

/* Pages of the document */
.sheet { position: relative; width: 1146px; height: 1474px; padding: 308px 132px 0; background: #fff; color: #000; font-family: "Liberation Serif", serif; font-size: 27px; line-height: 31px; }
.sheet-flow { padding-top: 133px; }
.sheet-main { margin-top: -127px; flex: none; box-shadow: 2px 0 4px #dcdde0, -1px 0 3px #e4e5e8; }
.sheet h1 { display: flex; justify-content: center; height: 36px; margin-bottom: 37px; font-size: 31px; line-height: 32px; white-space: nowrap; }
.sheet h1.second { margin-bottom: 89px; }
.sheet h1 .frame { padding: 0 5px; }
.sheet h2 { display: flex; height: 27px; margin: 38px 0 18px; padding-left: 3px; font-size: 20px; line-height: 25px; font-weight: bold; white-space: nowrap; }
.sheet-main h2 { padding-left: 0; }
.sheet h2 .frame { padding: 0 4px 0 3px; }
.body { position: relative; padding: 0 5px 2px 3px; }
.sheet h1 + .body { padding-bottom: 1px; }
.body p > span { display: block; text-align-last: justify; white-space: nowrap; }
.body p.lead > span:first-child { padding-left: 27px; }
.body p > span.end { text-align-last: left; }
.body sup { font-size: 17px; line-height: 0; color: #2a2aa5; }
.sheet small { font-size: 20px; }
.frame { --c: #adadad; background:
  repeating-linear-gradient(90deg, var(--c) 0 12px, transparent 12px 16px) top / 100% 1px no-repeat,
  repeating-linear-gradient(90deg, var(--c) 0 12px, transparent 12px 16px) bottom / 100% 1px no-repeat,
  repeating-linear-gradient(var(--c) 0 12px, transparent 12px 16px) left / 1px 100% no-repeat,
  repeating-linear-gradient(var(--c) 0 12px, transparent 12px 16px) right / 1px 100% no-repeat; }
.frame-on { --c: #9c4f4b; }
.grip { position: absolute; width: 14px; height: 14px; border: 2px solid #d3827e; border-radius: 7px; background: #fff; }
.g-nw { left: -7px; top: -7px; } .g-ne { right: -7px; top: -7px; }
.g-sw { left: -7px; bottom: -7px; } .g-se { right: -7px; bottom: -7px; }
.g-n, .g-s { width: 34px; height: 12px; left: 50%; margin-left: -17px; }
.g-n { top: -6px; } .g-s { bottom: -6px; }
.g-w, .g-e { width: 12px; height: 34px; top: 50%; margin-top: -17px; }
.g-w { left: -6px; } .g-e { right: -6px; }

/* Viewer */
.viewer { flex: 1; min-width: 0; display: flex; overflow: hidden; }
.canvas { flex: 1; min-width: 0; display: flex; justify-content: center; align-items: flex-start; overflow: hidden; padding-right: 2px; }
.scrollbar { width: 32px; padding: 22px 0 19px; display: flex; flex-direction: column; align-items: center; flex: none; }
.scrollbar span { width: 16px; height: 60px; margin: 25px 0 auto; border-radius: 8px; background: #d6d6d8; }
.scrollbar .up { border-bottom: 9px solid #b8b8bb; }
.scrollbar .dn { border-top: 9px solid #b8b8bb; }
.rail-right { width: 53px; border-left: 2px solid #dcdde0; padding: 44px 0 0 19px; flex: none; overflow: hidden; }

/* Context menu over the page */
.context { position: absolute; left: 225px; top: 713px; width: 487px; padding: 0 0 1px; background: #fff; border: 1px solid #c9c9cf; box-shadow: 3px 3px 5px rgba(0,0,0,.4); font-family: "Noto Sans", "Open Sans", sans-serif; font-size: 24px; line-height: 30px; color: #000; }
.mi { width: 100%; height: 56px; padding: 0 24px 0 25px; justify-content: flex-start; }
.mi:disabled { color: #8a8a8a; }
.mi-hover { background: #ebecf5; }
.mi-name { min-width: 178px; margin: 0 29px 0 16px; text-align: left; }
.mi-more { border: 6px solid transparent; border-left: 8px solid #555; border-right: 0; margin-left: auto; }
.context hr { height: 2px; margin: 8px 0; border: 0; background: #e2e2e4; }

/* Status bar */
.status { flex: none; display: flex; align-items: center; height: 58px; border-top: 3px solid #c8c8c8; background: #efefef; color: #666; font-size: 23px; }
.st-left { width: 41%; flex: none; display: flex; align-items: center; gap: 28px; padding-left: 46px; }
.st-sep { width: 2px; height: 36px; background: #f8f8f8; }
.st-left .st-sep { margin-left: -11px; }
.paper { margin-left: 10px; }
.st-nav { display: flex; align-items: center; flex: none; margin-left: 5px; }
.st-nav input { width: 214px; height: 38px; margin: 0 28px; text-align: center; background: #fff; color: #444; border: 2px solid #e4e4e4; }
.st-nav button:first-child { margin-right: 39px; }
.st-nav button:last-child { margin-left: 40px; }
.st-right { flex: 1; display: flex; align-items: center; justify-content: flex-end; padding-right: 24px; }
.vw { width: 48px; height: 50px; margin-left: 12px; }
.vw-on { background: #dfe0ec; box-shadow: inset 0 0 0 2px #c9cbdc; }
.st-sep-b { margin-left: 10px; margin-right: 0; }
.st-sep-c { margin: 0 30px 0 6px; }
.pct { gap: 18px; margin-right: 34px; }
.full { margin-left: 31px; }
.zoom-range { appearance: none; width: 180px; height: 24px; margin: 0 22px; background: linear-gradient(90deg, #666 34%, #c9c9c9 34%) center / 100% 6px no-repeat; }
.zoom-range::-webkit-slider-thumb { appearance: none; width: 20px; height: 20px; border: 2px solid #666; border-radius: 10px; background: #fff; }
```
